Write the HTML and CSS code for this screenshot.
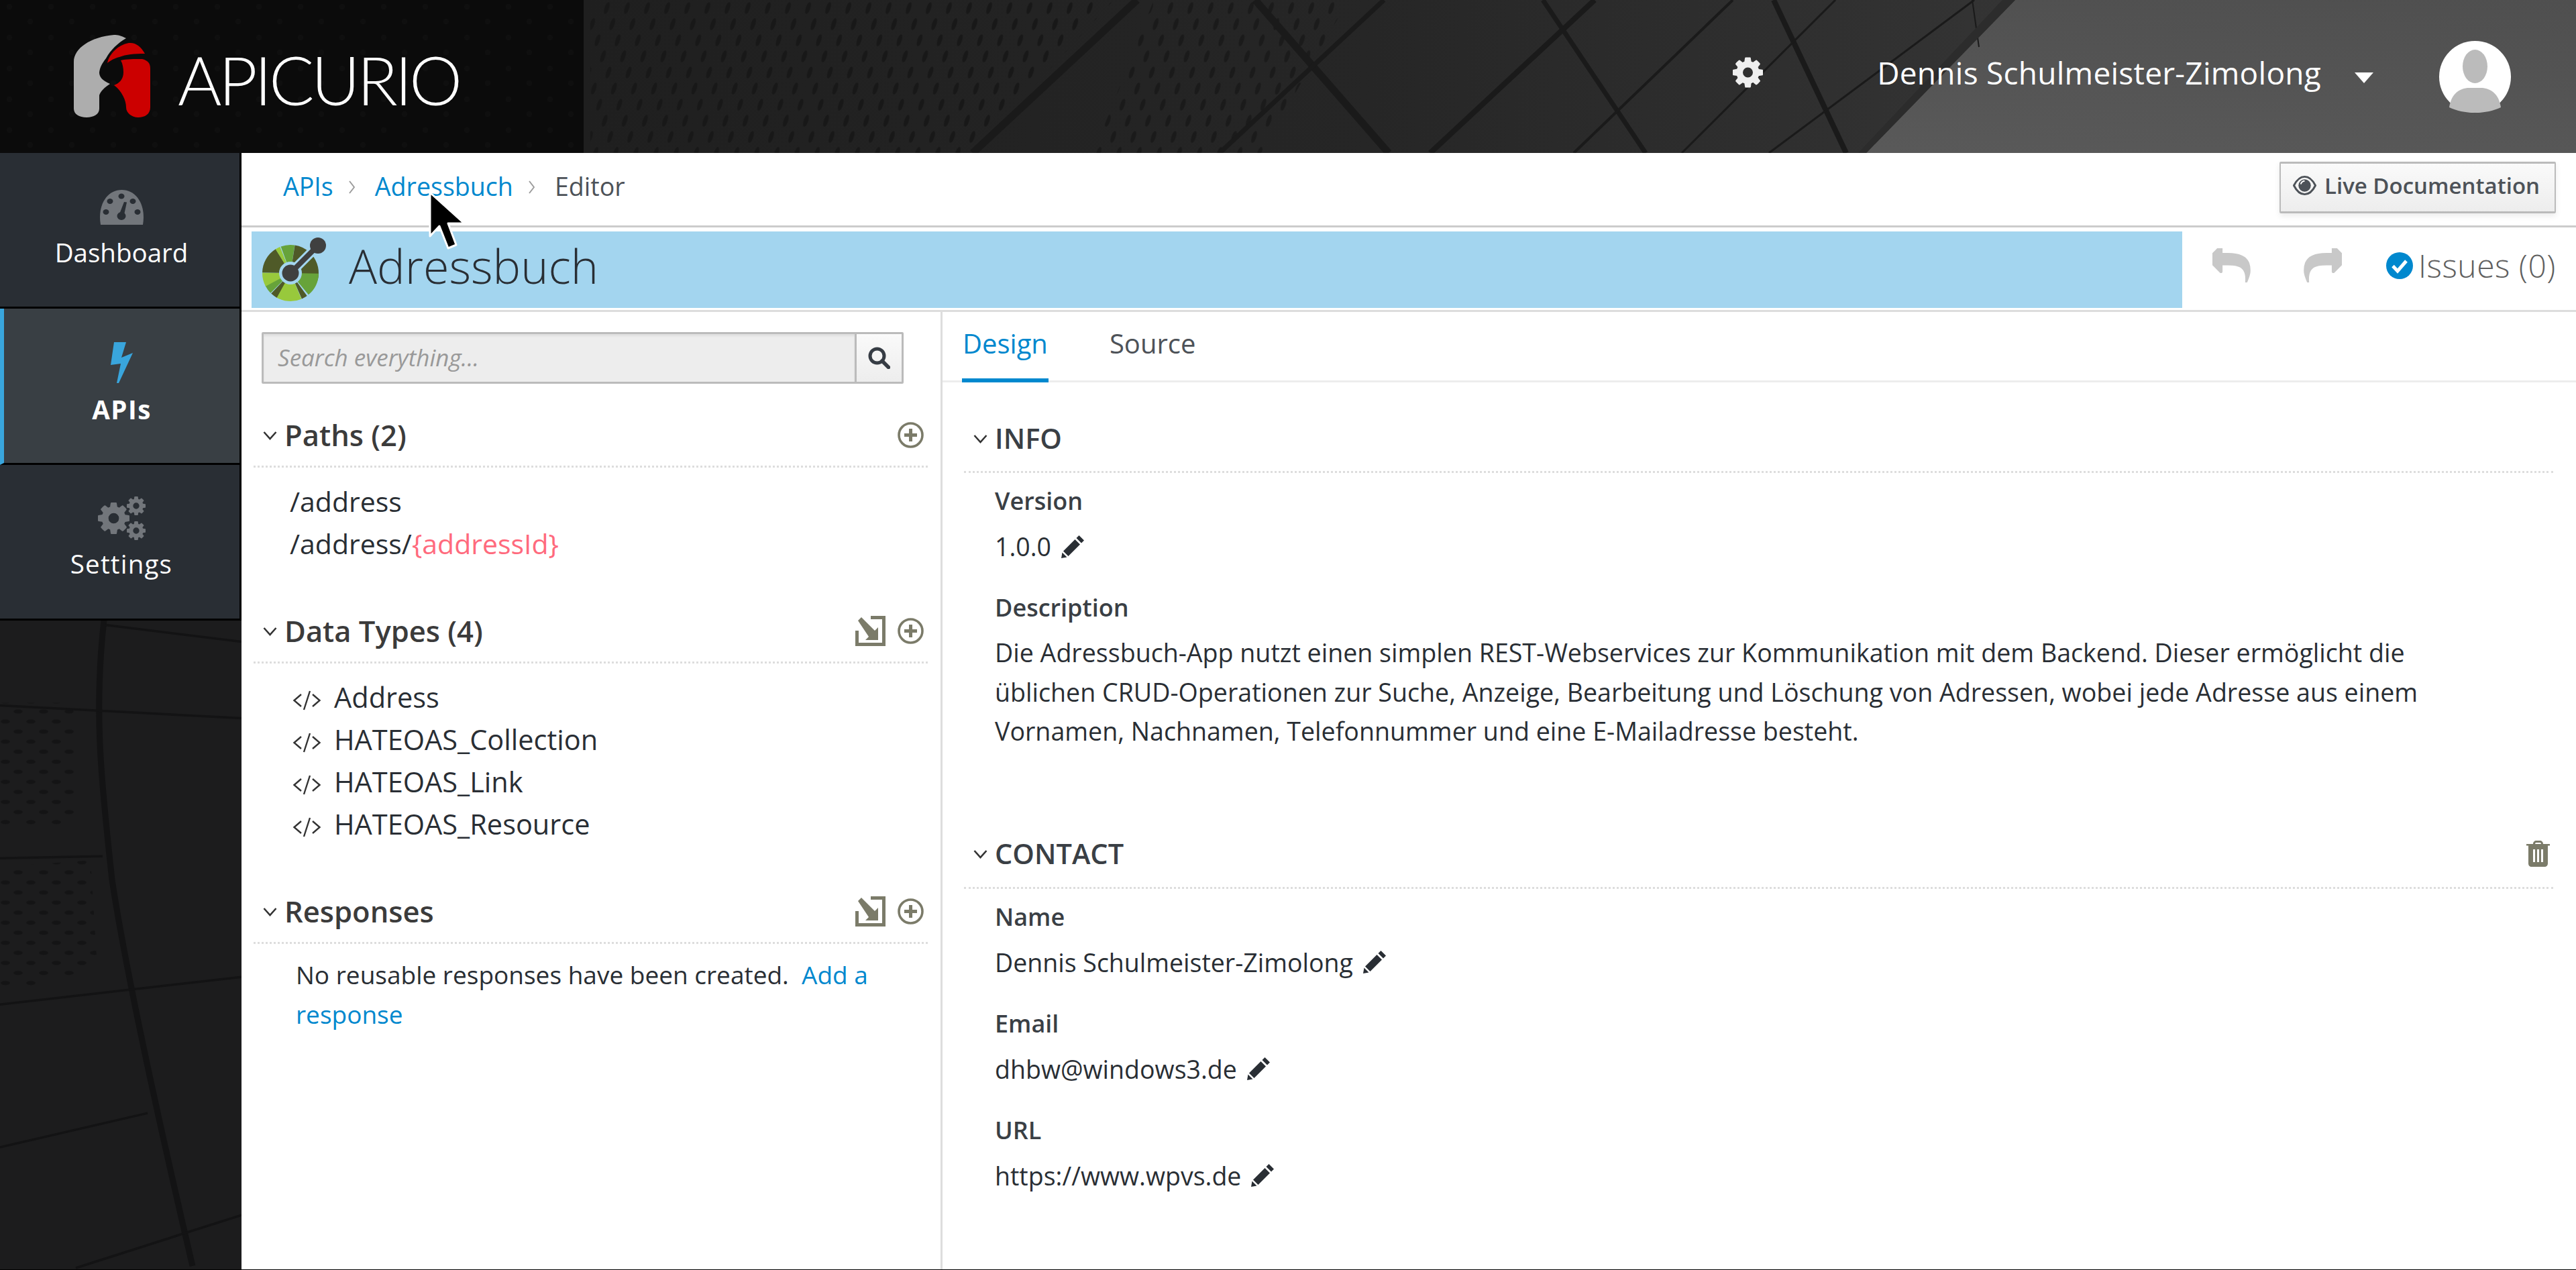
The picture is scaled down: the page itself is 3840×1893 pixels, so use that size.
FILE: index.html
```html
<!DOCTYPE html>
<html lang="en">
<head>
<meta charset="utf-8">
<title>Apicurio - Adressbuch Editor</title>
<link rel="stylesheet" href="styles.css">
</head>
<body>
<svg class="defs" width="0" height="0">
  <defs>
    <symbol id="cog" viewBox="128 128 1536 1536"><path d="M1152 896q0-106-75-181t-181-75-181 75-75 181 75 181 181 75 181-75 75-181zm512-109v222q0 12-8 23t-20 13l-185 28q-19 54-39 91 35 50 107 138 10 12 10 25t-9 23q-27 37-99 108t-94 71q-12 0-26-9l-138-108q-44 23-91 38-16 136-29 186-7 28-36 28h-222q-14 0-24.5-8.5t-11.5-21.5l-28-184q-49-16-90-37l-141 107q-10 9-25 9-14 0-25-11-126-114-165-168-7-10-7-23 0-12 8-23 15-21 51-66.5t54-70.5q-27-50-41-99l-183-27q-13-2-21-12.5t-8-23.5v-222q0-12 8-23t19-13l186-28q14-46 39-92-40-57-107-138-10-12-10-24 0-10 9-23 26-36 98.5-107.5t94.5-71.5q13 0 26 10l138 107q44-23 91-38 16-136 29-186 7-28 36-28h222q14 0 24.5 8.5t11.5 21.5l28 184q49 16 90 37l142-107q9-9 24-9 13 0 25 10 129 119 165 170 7 8 7 22 0 12-8 23-15 21-51 66.5t-54 70.5q26 50 41 98l183 28q13 2 21 12.5t8 23.5z"/></symbol>
    <symbol id="chev" viewBox="0 0 21 14"><polyline points="1.5,2 10.5,12 19.5,2" fill="none" stroke="#333" stroke-width="2.6"/></symbol>
    <symbol id="crumb" viewBox="0 0 9 20"><polyline points="1,1 8,10 1,19" fill="none" stroke="#9c9c9c" stroke-width="2"/></symbol>
    <symbol id="plus" viewBox="0 0 39 39"><circle cx="19.5" cy="19.5" r="17.5" fill="none" stroke="#7b7b69" stroke-width="3.6"/><path d="M17 10h5v7h7v5h-7v7h-5v-7h-7v-5h7z" fill="#7b7b69"/></symbol>
    <symbol id="import" viewBox="0 0 45 45"><path d="M23 2.5H42.5V42.5H2.5V22" fill="none" stroke="#7b7b69" stroke-width="5"/><path d="M4 7l5-5 20 20 5-5v19H15l5-5z" fill="#7b7b69"/></symbol>
    <symbol id="code" viewBox="0 0 43 30"><path d="M13 6 2.5 15 13 24M26 1 17 29M30 6l10.5 9L30 24" fill="none" stroke="#333" stroke-width="2.4"/></symbol>
    <symbol id="pencil" viewBox="0 0 34 34"><path d="M26.5 0 34 7.500 30 11.500 22.500 4zM20.500 6 28 13.500 10.500 31 3 23.500zM1.500 25.500 8.500 32.500 0 34z" fill="#292e34"/></symbol>
    <symbol id="reply" viewBox="128 192 1536 1408"><path d="M1664 1120q0 166-127 451-3 7-10.500 24t-13.500 30-13 22q-12 17-28 17-15 0-23.500-10t-8.500-25q0-9 2.500-26.500t2.500-23.500q5-68 5-123 0-101-17.500-181t-48.500-138.500-80-101-105.500-69.500-133-42.500-154-21.500-175.500-6h-224v256q0 26-19 45t-45 19-45-19l-512-512q-19-19-19-45t19-45l512-512q19-19 45-19t45 19 19 45v256h224q713 0 875 403 53 134 53 333z"/></symbol>
  </defs>
</svg>

<div class="app">
  <header class="topbar">
    <svg class="backdrop" viewBox="0 0 3840 228" preserveAspectRatio="none" aria-hidden="true">
      <defs>
        <linearGradient id="bldg" x1="0" x2="1" y1="0" y2="0"><stop offset="0" stop-color="#1f1f1f"/><stop offset="0.55" stop-color="#262626"/><stop offset="1" stop-color="#343434"/></linearGradient>
        <linearGradient id="sky" x1="0" x2="1" y1="1" y2="0"><stop offset="0" stop-color="#5f5f5f"/><stop offset="0.5" stop-color="#575757"/><stop offset="1" stop-color="#4f4f4f"/></linearGradient>
        <pattern id="topdots" width="30" height="48" patternUnits="userSpaceOnUse" patternTransform="skewX(-16)"><ellipse cx="8" cy="12" rx="3.500" ry="9" fill="#181818"/><ellipse cx="23" cy="36" rx="3.500" ry="9" fill="#181818"/></pattern>
        <pattern id="blackdots" width="62" height="46" patternUnits="userSpaceOnUse"><circle cx="14" cy="10" r="4" fill="#0f0f0f"/><circle cx="45" cy="32" r="4" fill="#0f0f0f"/></pattern>
      </defs>
      <rect width="3840" height="228" fill="url(#sky)"/>
      <polygon points="870,0 3004,0 2782,228 870,228" fill="url(#bldg)"/>
      <polygon points="880,0 1660,0 1450,228 880,228" fill="url(#topdots)"/>
      <polygon points="1720,0 2010,0 1880,228 1630,228" fill="url(#topdots)" opacity=".8"/>
      <g fill="none" stroke="#1a1a1a">
        <path d="M1695 0 1450 228" stroke-width="11"/>
        <path d="M1871 0 2070 228" stroke-width="11"/>
        <path d="M2063 0 1818 228" stroke-width="7"/>
        <path d="M2377 0 2132 228" stroke-width="8"/>
        <path d="M2300 0 2453 228" stroke-width="7"/>
        <path d="M2583 0 2346 228" stroke-width="4"/>
        <path d="M2644 0 2752 228" stroke-width="8"/>
        <path d="M2736 0 2507 228" stroke-width="3"/>
        <path d="M2943 0 2637 228" stroke-width="3"/>
        <path d="M2940 0 2950 70" stroke-width="2"/>
      </g>
      <polygon points="2985,0 3004,0 2782,228 2770,228" fill="#2c2c2c"/>
      <rect width="870" height="228" fill="#0b0b0b"/>
      <rect width="870" height="228" fill="url(#blackdots)"/>
    </svg>
    <a class="logo">
      <svg class="logo-mark" viewBox="0 0 115 124" aria-hidden="true">
        <path d="M78 5C70 1 66 0 60 0 25 3 0 20 0 40V110C0 118 8 123 19 123 30 123 38 118 38 110V90C40 84 46 78 54 73 42 68 38 62 38 56 39 48 42 43 48 35 55 22 66 12 78 5Z" fill="#adadad"/>
        <path d="M50 42C53 28 66 15 82 12 92 11 100 17 106 28 90 28 78 29 68 33 60 35 55 38 50 42Z" fill="#cc0000"/>
        <path d="M70 38C78 36 90 36 102 36 110 38 114 42 114 50V108C114 118 106 123 96 123 86 123 78 116 78 108 78 98 72 84 60 75 68 72 74 66 74 56 74 50 73 43 70 38Z" fill="#cc0000"/>
      </svg>
      <span class="logo-text">APICURIO</span>
    </a>
    <svg class="top-gear" aria-hidden="true"><use href="#cog"/></svg>
    <span class="user-name">Dennis Schulmeister-Zimolong</span>
    <svg class="user-caret" viewBox="0 0 28 16" aria-hidden="true"><path d="M0 0H28L14 16Z" fill="#fff"/></svg>
    <svg class="avatar" viewBox="0 0 107 107" aria-hidden="true">
      <circle cx="53.500" cy="53.500" r="53.500" fill="#fff"/>
      <ellipse cx="53.500" cy="38" rx="18.500" ry="25" fill="#bbb"/>
      <path d="M15 99C18 80 28 72 42 70H65C79 72 89 80 92 99 82 104 68 107 53.500 107S25 104 15 99Z" fill="#bbb"/>
    </svg>
  </header>

  <div class="workspace">
    <nav class="sidebar">
      <svg class="backdrop" viewBox="0 0 360 1665" preserveAspectRatio="none" aria-hidden="true">
        <defs>
          <pattern id="sidedots" width="38" height="30" patternUnits="userSpaceOnUse"><ellipse cx="8" cy="8" rx="7" ry="3.200" fill="#141415"/><ellipse cx="27" cy="23" rx="7" ry="3.200" fill="#141415"/></pattern>
        </defs>
        <rect width="360" height="1665" fill="#1c1c1d"/>
        <polygon points="0,820 112,820 112,1005 0,1005" fill="url(#sidedots)"/>
        <polygon points="0,1065 135,1055 145,1215 0,1255" fill="url(#sidedots)"/>
        <g fill="none" stroke="#131314">
          <path d="M155 697C140 830 150 930 167 1084 180 1170 210 1330 287 1660" stroke-width="9"/>
          <path d="M157 704 360 729M0 824 360 843M0 1052 153 1049M0 1270 360 1229M0 1483 220 1432M113 1663 360 1584" stroke-width="3.500"/>
        </g>
      </svg>
      <a class="nav-item">
        <svg class="nav-icon" viewBox="0 0 67 52" aria-hidden="true">
          <path d="M2 52C-3 22 12 0 33.500 0S70 22 65 52Z" fill="#72767b"/>
          <g fill="#292e34"><ellipse cx="33" cy="9.500" rx="4.500" ry="4"/><ellipse cx="16" cy="17" rx="4.500" ry="4"/><ellipse cx="50" cy="17" rx="4.500" ry="4"/><ellipse cx="10" cy="33" rx="4.500" ry="4"/><ellipse cx="57" cy="33" rx="4.500" ry="4"/><ellipse cx="33" cy="39" rx="6.500" ry="6"/><path d="M37 18 41 18.500 37 37 30 36Z"/></g>
        </svg>
        <span class="nav-label">Dashboard</span>
      </a>
      <a class="nav-item nav-item-active">
        <svg class="nav-bolt" viewBox="165 510 33 61" aria-hidden="true"><path d="M170 510H188L181 533 198 526 177 571H174L180 542 165 544Z" fill="#39a5dc"/></svg>
        <span class="nav-label">APIs</span>
      </a>
      <a class="nav-item nav-item-settings">
        <svg class="nav-cogs" viewBox="0 0 71 65" aria-hidden="true" fill="#72767b">
          <use href="#cog" x="0" y="9" width="47" height="47"/>
          <use href="#cog" x="43" y="0" width="28" height="28"/>
          <use href="#cog" x="43" y="37" width="28" height="28"/>
        </svg>
        <span class="nav-label">Settings</span>
      </a>
    </nav>

    <main class="main">
      <div class="crumbbar">
        <a class="link">APIs</a>
        <svg class="crumb-sep" aria-hidden="true"><use href="#crumb"/></svg>
        <a class="link">Adressbuch</a>
        <svg class="crumb-sep" aria-hidden="true"><use href="#crumb"/></svg>
        <span class="crumb-current">Editor</span>
        <button class="live-doc">
          <svg class="eye" viewBox="0 0 36 36" aria-hidden="true"><path d="M1.500 18C6 9 11.500 4.500 18 4.500S30 9 34.500 18C30 27 24.500 31.500 18 31.500S6 27 1.500 18Z" fill="none" stroke="#4d5258" stroke-width="3"/><circle cx="18" cy="18" r="9.500" fill="#4d5258"/><path d="M12 16c1-3 3-5 6-5" stroke="#fff" stroke-width="2" fill="none"/></svg>
          Live Documentation
        </button>
      </div>

      <div class="titlebar">
        <div class="title-blue">
          <svg class="oai" viewBox="0 0 96 96" aria-hidden="true">
            <g fill="none" stroke-width="28">
              <circle class="seg seg-dark" cx="43" cy="53" r="28" stroke-dasharray="27 176" transform="rotate(-40 43 53)"/>
              <circle class="seg seg-green" cx="43" cy="53" r="28" stroke-dasharray="24 176" transform="rotate(1 43 53)"/>
              <circle class="seg seg-dark" cx="43" cy="53" r="28" stroke-dasharray="6 176" transform="rotate(54 43 53)"/>
              <circle class="seg seg-lime" cx="43" cy="53" r="28" stroke-dasharray="27 176" transform="rotate(67 43 53)"/>
              <circle class="seg seg-dark" cx="43" cy="53" r="28" stroke-dasharray="7 176" transform="rotate(119 43 53)"/>
              <circle class="seg seg-green" cx="43" cy="53" r="28" stroke-dasharray="9 176" transform="rotate(135 43 53)"/>
              <circle class="seg seg-lime" cx="43" cy="53" r="28" stroke-dasharray="14 176" transform="rotate(152 43 53)"/>
              <circle class="seg seg-dark" cx="43" cy="53" r="28" stroke-dasharray="28 176" transform="rotate(181 43 53)"/>
              <circle class="seg seg-lime" cx="43" cy="53" r="28" stroke-dasharray="5 176" transform="rotate(238 43 53)"/>
              <circle class="seg seg-green" cx="43" cy="53" r="28" stroke-dasharray="14 176" transform="rotate(250 43 53)"/>
              <circle class="seg seg-dark" cx="43" cy="53" r="28" stroke-dasharray="16 176" transform="rotate(279 43 53)"/>
            </g>
            <path d="M43 53 84 12" stroke="#a3d5ef" stroke-width="14"/>
            <circle cx="43" cy="53" r="17" fill="#a3d5ef"/>
            <path d="M43 53 84 12" stroke="#404040" stroke-width="8"/>
            <circle cx="43" cy="53" r="12.500" fill="#404040"/>
            <circle cx="84" cy="12" r="12" fill="#404040"/>
          </svg>
          <h1 class="title-text">Adressbuch</h1>
        </div>
        <div class="title-actions">
          <svg class="hist" aria-hidden="true"><use href="#reply"/></svg>
          <svg class="hist hist-redo" aria-hidden="true"><use href="#reply"/></svg>
          <svg class="check" viewBox="0 0 40 40" aria-hidden="true"><circle cx="20" cy="20" r="20" fill="#0088ce"/><path d="M10 20.500 17 28 30 13" fill="none" stroke="#fff" stroke-width="5"/></svg>
          <span class="issues">Issues (0)</span>
        </div>
      </div>

      <div class="panels">
        <aside class="outline">
          <div class="search">
            <span class="search-input">Search everything...</span>
            <span class="search-btn"><svg class="search-icon" viewBox="0 0 33 33" aria-hidden="true"><circle cx="13.500" cy="13.500" r="10.500" fill="none" stroke="#363c44" stroke-width="5"/><path d="M21 21 30.500 30.500" stroke="#363c44" stroke-width="5.500" stroke-linecap="round"/></svg></span>
          </div>

          <section class="group">
            <div class="group-head">
              <svg class="chev" aria-hidden="true"><use href="#chev"/></svg>
              <h2 class="group-title">Paths (2)</h2>
              <svg class="plus" aria-hidden="true"><use href="#plus"/></svg>
            </div>
            <ul class="list">
              <li class="path-item">/address</li>
              <li class="path-item">/address/<span class="param">{addressId}</span></li>
            </ul>
          </section>

          <section class="group">
            <div class="group-head">
              <svg class="chev" aria-hidden="true"><use href="#chev"/></svg>
              <h2 class="group-title">Data Types (4)</h2>
              <svg class="import" aria-hidden="true"><use href="#import"/></svg>
              <svg class="plus" aria-hidden="true"><use href="#plus"/></svg>
            </div>
            <ul class="list">
              <li class="type-item"><svg class="code" aria-hidden="true"><use href="#code"/></svg>Address</li>
              <li class="type-item"><svg class="code" aria-hidden="true"><use href="#code"/></svg>HATEOAS_Collection</li>
              <li class="type-item"><svg class="code" aria-hidden="true"><use href="#code"/></svg>HATEOAS_Link</li>
              <li class="type-item"><svg class="code" aria-hidden="true"><use href="#code"/></svg>HATEOAS_Resource</li>
            </ul>
          </section>

          <section class="group">
            <div class="group-head">
              <svg class="chev" aria-hidden="true"><use href="#chev"/></svg>
              <h2 class="group-title">Responses</h2>
              <svg class="import" aria-hidden="true"><use href="#import"/></svg>
              <svg class="plus" aria-hidden="true"><use href="#plus"/></svg>
            </div>
            <p class="empty">No reusable responses have been created.&nbsp; <a class="link">Add a</a> <a class="link">response</a></p>
          </section>
        </aside>

        <section class="editor">
          <div class="tabs">
            <a class="tab tab-active">Design</a>
            <a class="tab">Source</a>
          </div>
          <div class="form">
            <section class="form-section">
              <div class="form-head">
                <svg class="chev" aria-hidden="true"><use href="#chev"/></svg>
                <h2 class="form-title">INFO</h2>
              </div>
              <div class="field">
                <div class="field-label">Version</div>
                <div class="field-value">1.0.0<svg class="pencil" aria-hidden="true"><use href="#pencil"/></svg></div>
              </div>
              <div class="field">
                <div class="field-label">Description</div>
                <div class="field-value field-desc">Die Adressbuch-App nutzt einen simplen REST-Webservices zur Kommunikation mit dem Backend. Dieser ermöglicht die üblichen CRUD-Operationen zur Suche, Anzeige, Bearbeitung und Löschung von Adressen, wobei jede Adresse aus einem Vornamen, Nachnamen, Telefonnummer und eine E-Mailadresse besteht.</div>
              </div>
            </section>
            <section class="form-section">
              <div class="form-head">
                <svg class="chev" aria-hidden="true"><use href="#chev"/></svg>
                <h2 class="form-title">CONTACT</h2>
                <svg class="trash" viewBox="0 0 35 39" aria-hidden="true"><path d="M10 5C10 2 12 0 15 0H20C23 0 25 2 25 5H35V7.500H32V34C32 37 30 39 27 39H8C5 39 3 37 3 34V7.500H0V5ZM13 5H22C22 3.500 21 3 20 3H15C14 3 13 3.500 13 5ZM10 13V32H13V13ZM16 13V32H19V13ZM22 13V32H25V13Z" fill="#7b7b69" fill-rule="evenodd"/></svg>
              </div>
              <div class="field">
                <div class="field-label">Name</div>
                <div class="field-value">Dennis Schulmeister-Zimolong<svg class="pencil" aria-hidden="true"><use href="#pencil"/></svg></div>
              </div>
              <div class="field">
                <div class="field-label">Email</div>
                <div class="field-value">dhbw@windows3.de<svg class="pencil" aria-hidden="true"><use href="#pencil"/></svg></div>
              </div>
              <div class="field">
                <div class="field-label">URL</div>
                <div class="field-value">https://www.wpvs.de<svg class="pencil" aria-hidden="true"><use href="#pencil"/></svg></div>
              </div>
            </section>
          </div>
        </section>
      </div>
    </main>
  </div>

  <svg class="cursor" viewBox="0 0 56 88" aria-hidden="true"><path d="M3 3V68L17 53 30 86 42 81 30 49H54Z" fill="#000" stroke="#fff" stroke-width="3" stroke-linejoin="round"/></svg>
</div>
</body>
</html>
```
FILE: styles.css
```css
* { box-sizing: border-box; }
html, body { margin: 0; padding: 0; }
body { font-family: "Open Sans", "Noto Sans", sans-serif; font-size: 37.600px; color: #292e34; background: #fff; }
.defs { position: absolute; }
ul { list-style: none; margin: 0; padding: 0; }
h1, h2, p { margin: 0; font-weight: inherit; font-size: inherit; }
.link { color: #0088ce; }

.app { position: relative; width: 3840px; height: 1893px; display: flex; flex-direction: column; overflow: hidden; border-bottom: 1px solid #000; }
.backdrop { position: absolute; left: 0; top: 0; width: 100%; height: 100%; }

/* top bar */
.topbar { position: relative; flex: 0 0 228px; display: flex; align-items: center; padding: 0 97px 0 110px; color: #fff; }
.logo { position: relative; display: flex; align-items: center; }
.logo-mark { width: 115px; height: 124px; }
.logo-text { font-family: "Lato", sans-serif; font-weight: 300; font-size: 100px; line-height: 1; letter-spacing: -4.500px; margin-left: 40px; margin-top: 8px; }
.top-gear { position: relative; width: 45px; height: 46px; margin-left: auto; margin-bottom: 12px; fill: #eee; }
.user-name { position: relative; font-size: 46px; letter-spacing: .25px; margin-left: 170px; margin-bottom: 12px; white-space: nowrap; }
.user-caret { position: relative; width: 28px; height: 16px; margin-left: 50px; margin-top: 4px; }
.avatar { position: relative; width: 107px; height: 107px; margin-left: 98px; }

.workspace { flex: 1; display: flex; min-height: 0; }

/* sidebar */
.sidebar { position: relative; flex: 0 0 360px; }
.nav-item { position: relative; display: flex; flex-direction: column; align-items: center; height: 232px; padding: 55px 0 0 5px; margin-right: 3px; border-bottom: 3px solid #000; background: #292e34; color: #fff; box-shadow: 3px 0 0 #000; }
.nav-item-active { background: #393f44; border-left: 6px solid #39a5dc; padding: 50px 0 0; font-weight: 700; height: 233px; }
.nav-icon { width: 67px; height: 52px; }
.nav-bolt { width: 33px; height: 61px; }
.nav-cogs { width: 71px; height: 65px; margin-top: -8px; }
.nav-label { font-size: 38.500px; line-height: 50px; margin-top: 16px; }
.nav-item-active .nav-label { margin-top: 14px; letter-spacing: 1.500px; }
.nav-item-settings .nav-label { margin-top: 10px; letter-spacing: 1.200px; }

/* main */
.main { flex: 1; min-width: 0; display: flex; flex-direction: column; background: #fff; }
.crumbbar { flex: 0 0 111px; display: flex; align-items: center; padding: 0 30px 10px 62px; border-bottom: 3px solid #ccc; }
.crumb-sep { width: 9px; height: 20px; margin: 4px 30px 0 23px; }
.crumb-current { color: #4d5258; }
.live-doc { margin-left: auto; width: 412px; height: 77px; padding: 0 0 6px 18px; display: flex; align-items: center; gap: 12px; font-family: inherit; font-size: 33px; font-weight: 600; color: #4d5258; background: linear-gradient(#fafafa, #ededed); border: 2px solid #bbb; border-top-width: 3px; border-bottom-width: 3px; border-radius: 2px; box-shadow: 0 4px 8px rgba(0,0,0,.08); white-space: nowrap; position: relative; top: 2px; }
.eye { width: 35px; height: 35px; }

.titlebar { flex: 0 0 126px; display: flex; padding: 6px 0 3px 15px; border-bottom: 3px solid #ddd; }
.title-blue { flex: 1; display: flex; align-items: center; background: #a3d5ef; padding-left: 15px; }
.oai { width: 96px; height: 96px; }
.seg-dark { stroke: #4f5a28; }
.seg-green { stroke: #67a33a; }
.seg-lime { stroke: #98c93c; }
.title-text { font-size: 70px; font-weight: 300; margin: 0 0 12px 34px; line-height: 1; }
.title-actions { flex: 0 0 587px; display: flex; align-items: center; padding: 0 0 13px 45px; }
.hist { width: 58px; height: 51px; fill: #c8c8c8; }
.hist-redo { margin-left: 77px; transform: scaleX(-1); }
.check { width: 40px; height: 40px; margin-left: 66px; }
.issues { font-size: 48px; font-weight: 300; color: #606060; margin-left: 8px; letter-spacing: .5px; white-space: nowrap; }

.panels { flex: 1; display: flex; min-height: 0; }
.outline { flex: 0 0 1045px; padding: 30px 19px 0 18px; border-right: 3px solid #ddd; }
.search { display: flex; height: 77px; margin: 0 36px 0 12px; border: 3px solid #bbb; border-radius: 2px; }
.search-input { flex: 1; display: flex; align-items: center; padding: 0 0 3px 21px; background: #ededed; color: #999; font-style: italic; font-size: 35px; box-shadow: inset 0 3px 3px rgba(0,0,0,.06); }
.search-btn { flex: 0 0 70px; display: flex; align-items: center; justify-content: center; border-left: 3px solid #bbb; background: linear-gradient(#fafafa, #ededed); }
.search-icon { width: 33px; height: 33px; }

.group { margin-top: 30px; margin-bottom: 52px; }
.group + .group { margin-top: 0; }
.group-head { display: flex; align-items: center; height: 95px; padding: 0 6px 0 14px; border-bottom: 3px dotted #ddd; }
.chev { width: 21px; height: 14px; flex: none; margin-top: 2px; }
.group-title { flex: 1; font-size: 43.500px; font-weight: 600; color: #3b3b3b; margin-left: 11px; white-space: nowrap; }
.plus { width: 39px; height: 39px; margin-left: 18px; }
.import { width: 45px; height: 45px; }
.list { padding: 19px 0 0 54px; }
.path-item { font-size: 41px; line-height: 63px; }
.param { color: #ff6a7d; }
.type-item { display: flex; align-items: center; font-size: 41.500px; line-height: 63px; }
.code { width: 43px; height: 30px; margin: 8px 19px 0 4px; flex: none; }
.empty { padding: 16px 20px 0 63px; line-height: 59px; font-size: 37px; }

.editor { flex: 1; min-width: 0; }
.tabs { display: flex; height: 105px; padding-left: 29px; border-bottom: 3px solid #ededed; }
.tab { font-size: 40px; color: #4d5258; padding: 19px 1px 0; height: 105px; margin-right: 90px; }
.tab-active { color: #0088ce; border-bottom: 6px solid #0088ce; }
.form { padding: 36px 34px 0 32px; }
.form-section { margin-bottom: 106px; }
.form-head { display: flex; align-items: center; height: 99px; padding: 0 5px 3px 14px; border-bottom: 3px dotted #ddd; }
.form-title { flex: 1; font-size: 41.500px; margin-left: 11px; font-weight: 600; color: #3a3f45; }
.field { padding-left: 46px; margin-top: 37px; }
.form-head + .field { margin-top: 17px; }
.field-label { font-size: 36px; font-weight: 600; line-height: 50px; margin-bottom: 13px; color: #3a3f45; }
.field-value { display: flex; align-items: center; font-size: 37.500px; line-height: 59px; }
.field-desc { display: block; font-size: 37.600px; line-height: 58.500px; max-width: 2150px; }
.pencil { width: 34px; height: 34px; margin-left: 15px; flex: none; }
.trash { width: 35px; height: 39px; }

.cursor { position: absolute; left: 638px; top: 284px; width: 56px; height: 88px; }
```
